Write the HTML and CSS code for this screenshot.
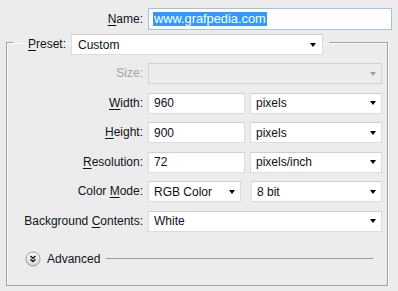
FILE: index.html
```html
<!DOCTYPE html>
<html lang="en">
<head>
    <meta charset="UTF-8">
    <title>New</title>
    <link rel="stylesheet" href="styles.css">
</head>
<body>
    <div class="dialog">
        <div class="name-row">
            <span class="label"><u>N</u>ame:</span>
            <div class="field focus"><span class="picked">www.grafpedia.com</span></div>
        </div>

        <fieldset class="group">
            <legend class="preset">
                <span class="label"><u>P</u>reset:</span>
                <div class="field drop preset-drop"><span>Custom</span><i class="arrow"></i></div>
            </legend>

            <div class="rows">
                <span class="label off">Size:</span>
                <div class="field drop off"><span></span><i class="arrow"></i></div>

                <span class="label"><u>W</u>idth:</span>
                <div class="pair">
                    <div class="field num">960</div>
                    <div class="field drop"><span>pixels</span><i class="arrow"></i></div>
                </div>

                <span class="label"><u>H</u>eight:</span>
                <div class="pair">
                    <div class="field num">900</div>
                    <div class="field drop"><span>pixels</span><i class="arrow"></i></div>
                </div>

                <span class="label"><u>R</u>esolution:</span>
                <div class="pair">
                    <div class="field num">72</div>
                    <div class="field drop"><span>pixels/inch</span><i class="arrow"></i></div>
                </div>

                <span class="label">Color <u>M</u>ode:</span>
                <div class="pair mode">
                    <div class="field drop mode-drop"><span>RGB Color</span><i class="arrow"></i></div>
                    <div class="field drop"><span>8 bit</span><i class="arrow"></i></div>
                </div>

                <span class="label">Background <u>C</u>ontents:</span>
                <div class="field drop"><span>White</span><i class="arrow"></i></div>
            </div>

            <div class="advanced">
                <svg class="toggle" width="16" height="16" viewBox="0 0 16 16">
                    <defs>
                        <linearGradient id="knob" x1="0" y1="0" x2="0" y2="1">
                            <stop offset="0" stop-color="#ffffff"/>
                            <stop offset="1" stop-color="#d4d4d4"/>
                        </linearGradient>
                    </defs>
                    <circle cx="8" cy="8" r="7" fill="url(#knob)" stroke="#9a9a9a"/>
                    <path d="M5.5 5 L8 7.3 L10.5 5 M5.5 8.2 L8 10.5 L10.5 8.2" fill="none" stroke="#1a1a1a" stroke-width="1.4"/>
                </svg>
                <span class="adv-text">Advanced</span>
                <span class="rule"></span>
            </div>
        </fieldset>
    </div>
</body>
</html>
```

FILE: styles.css
```css
body{
    margin:0;
    background:#ececec;
    font-family:"Liberation Sans", Arial, sans-serif;
    font-size:12px;
    color:#10131a;
}
.dialog{
    padding-top:8px;
}
.label{
    text-align:right;
    white-space:nowrap;
    line-height:21px;
}
.label u{
    text-decoration-thickness:1px;
    text-underline-offset:2px;
}
.label.off{
    color:#a3a3a3;
}

.field{
    box-sizing:border-box;
    height:21px;
    background:#fff;
    border:1px solid #dcdcdc;
    border-top-color:#cfcfcf;
    display:flex;
    align-items:center;
    padding:0 4px 0 5px;
    color:#0d0f14;
    white-space:nowrap;
}
.field.off{
    background:#ececec;
    border-color:#d2d2d2;
}
.field.focus{
    height:22px;
    border-color:#9cc3ec;
    padding-left:4px;
}
.picked{
    background:#3399ff;
    color:#fff;
    padding:0 1px;
    font-size:12.8px;
    line-height:14px;
}

.drop{
    justify-content:space-between;
}
.arrow{
    width:0;
    height:0;
    border-left:3.5px solid transparent;
    border-right:3.5px solid transparent;
    border-top:4px solid #000;
    margin-right:1px;
}
.off .arrow{
    border-top-color:#a0a0a0;
}

.name-row{
    display:grid;
    grid-template-columns:143px 244px;
    column-gap:5px;
    align-items:center;
}

.group{
    margin:4px 10px 0 6px;
    padding:13px 5px 18px 0;
    border:1px solid #a2a2a2;
    box-shadow:1px 1px 0 #fafafa, inset 1px 1px 0 #fafafa;
    min-width:0;
}
.preset{
    display:flex;
    height:16px;
    margin-left:6px;
    padding:0 6px 0 15px;
    column-gap:5px;
    align-items:flex-start;
}
.preset-drop{
    width:252px;
    padding-left:6px;
    padding-right:5px;
}

.rows{
    display:grid;
    grid-template-columns:136px 234px;
    column-gap:5px;
    row-gap:8.5px;
    align-items:center;
}
.pair{
    display:flex;
    column-gap:5px;
}
.pair .num{
    width:97px;
}
.pair .drop{
    flex:1;
}
.pair.mode{
    column-gap:10px;
}
.pair .mode-drop{
    flex:0 0 93px;
}

.advanced{
    display:flex;
    align-items:center;
    height:16px;
    margin-top:19px;
    padding-left:18px;
    padding-right:9px;
}
.toggle{
    display:block;
}
.adv-text{
    margin-left:6px;
}
.rule{
    flex:1;
    height:1px;
    background:#9a9a9a;
    margin-left:6px;
}
```
